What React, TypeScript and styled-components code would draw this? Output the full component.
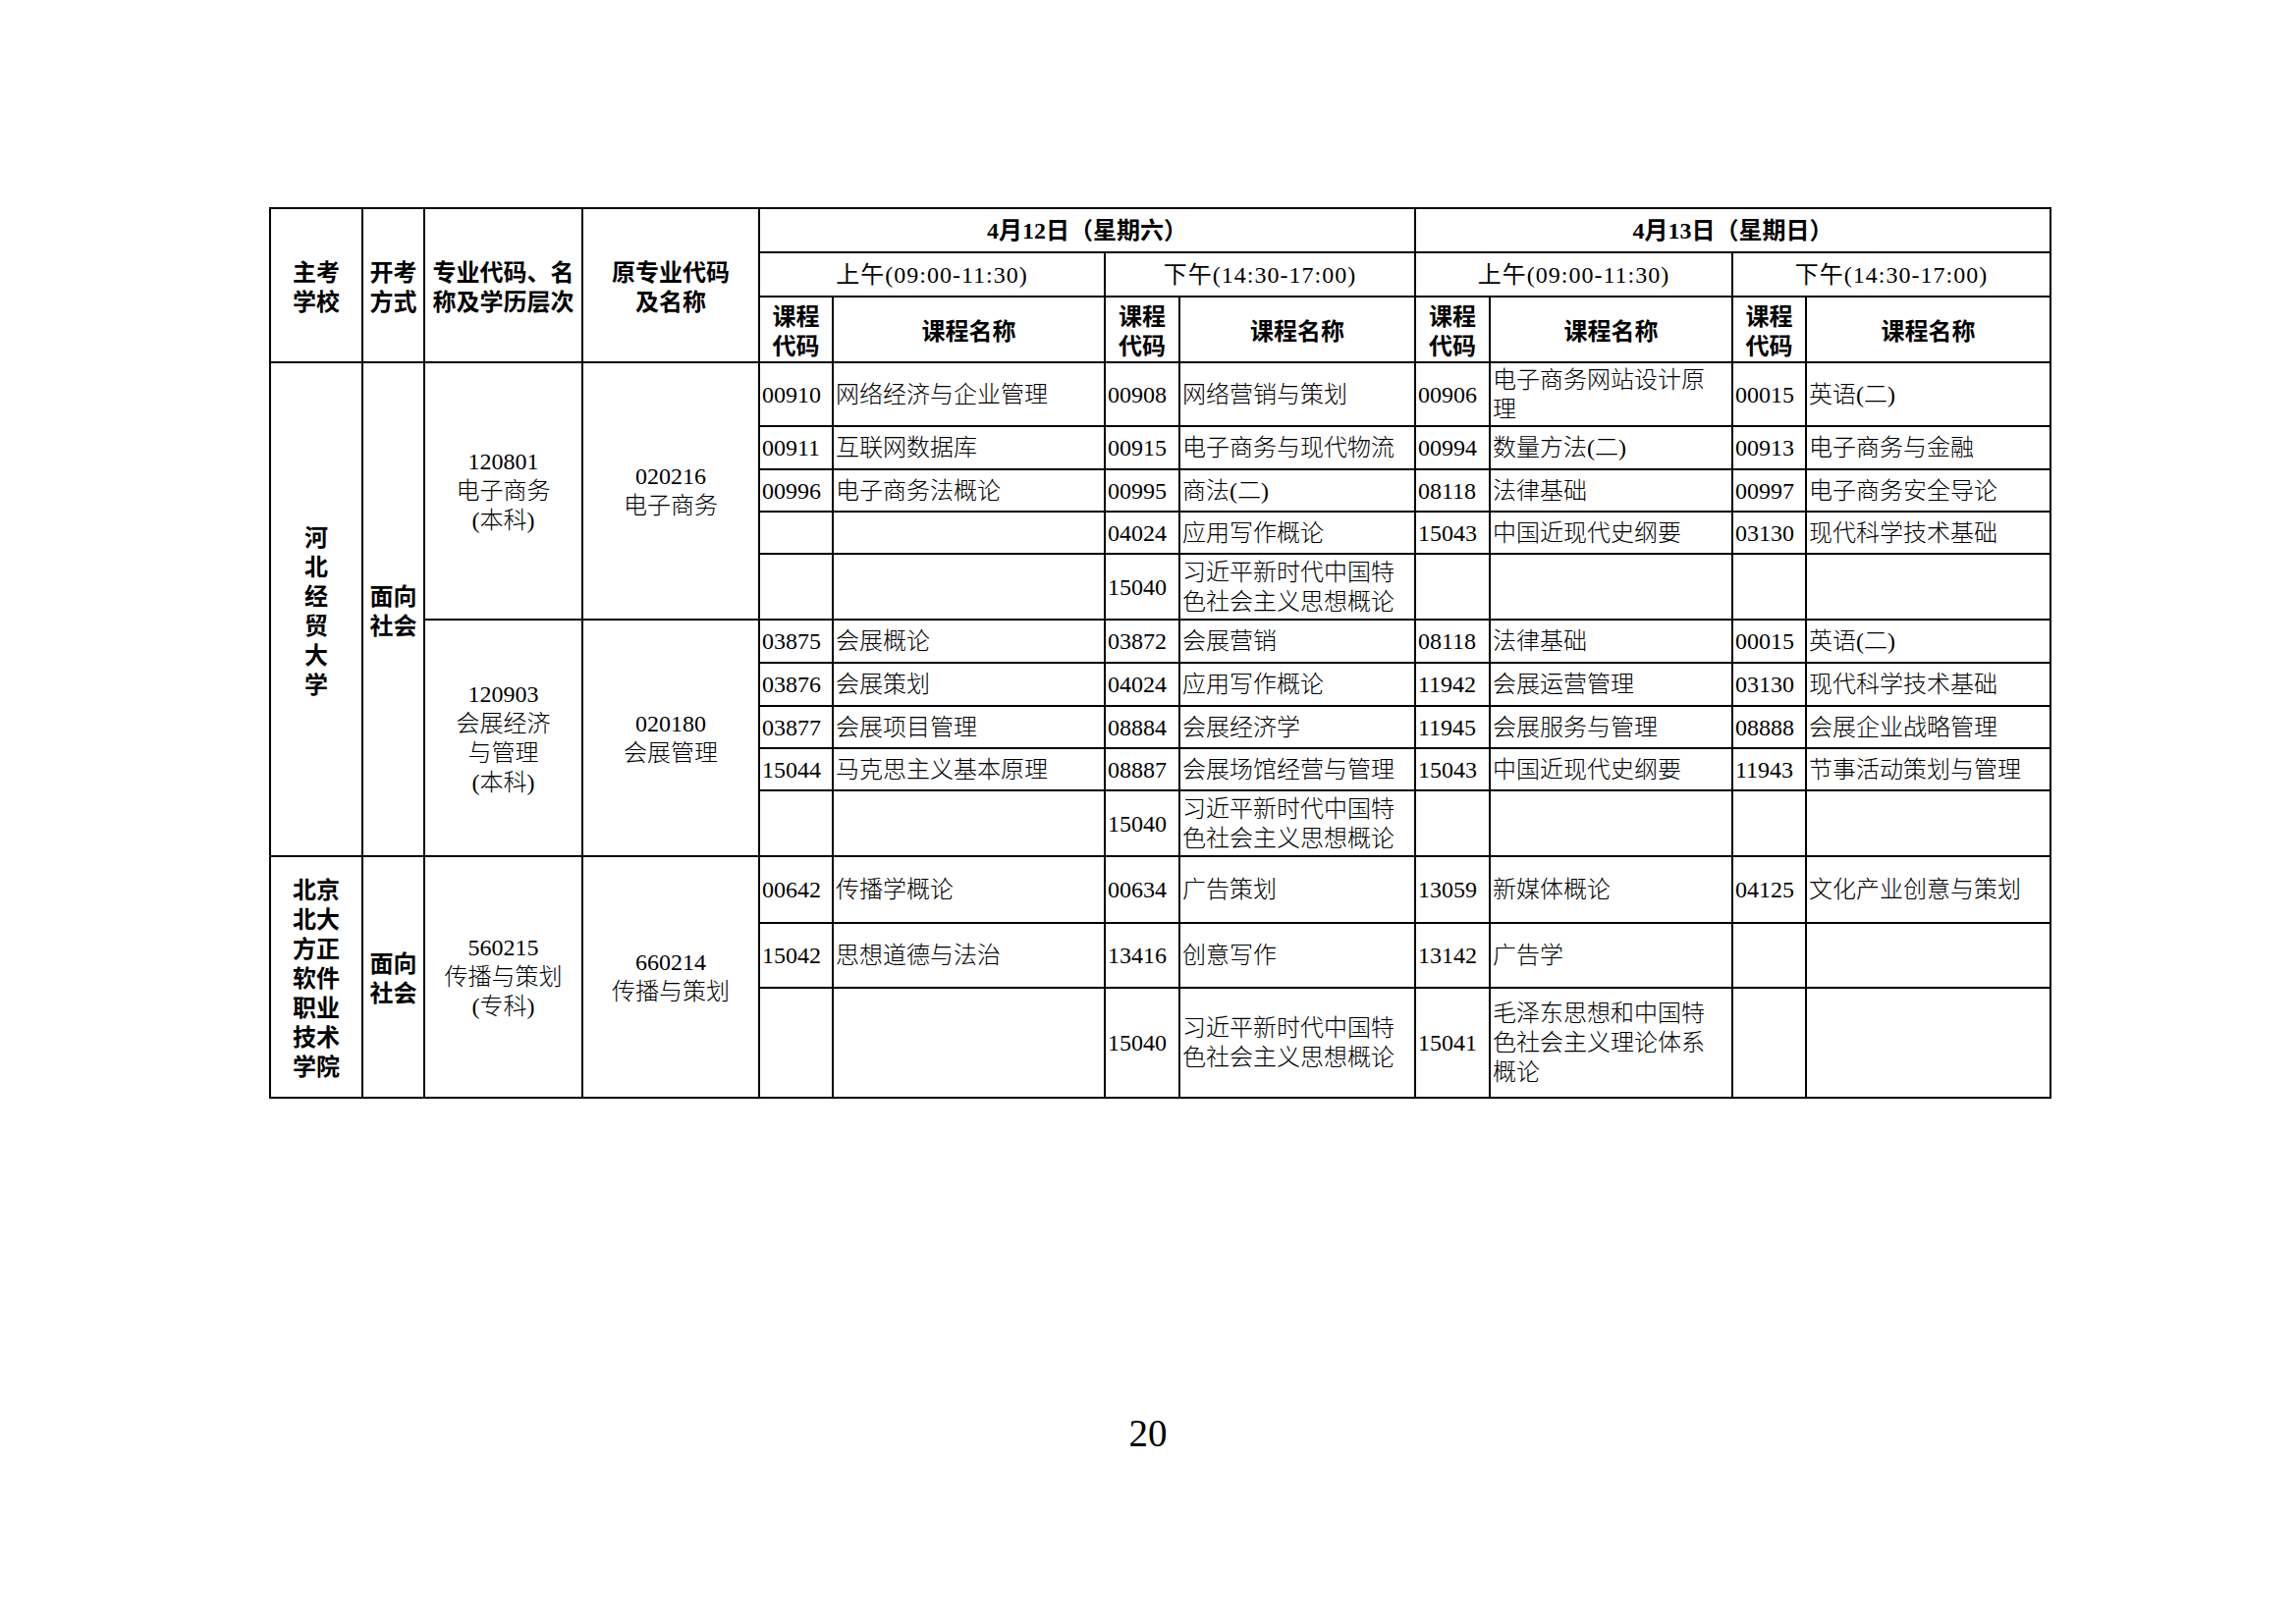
import React from 'react';
import styled, { createGlobalStyle } from 'styled-components';

const Global = createGlobalStyle`
  html, body { margin: 0; padding: 0; background: #fff; }
  body { font-family: "Liberation Serif", "Noto Sans CJK SC", serif; color: #000; }
`;

const Page = styled.div`
  width: 2338px;
  height: 1653px;
  box-sizing: border-box;
  padding-top: 211px;
  display: flex;
  flex-direction: column;
  overflow: hidden;
`;

const TableWrap = styled.div`
  padding-left: 274px;
`;

const Table = styled.table`
  border-collapse: collapse;
  table-layout: fixed;
  width: 1815px;
`;

const Row = styled.tr<{ $h: number }>`
  height: ${(p) => p.$h}px;
`;

const HeadCell = styled.th<{ $kind?: 'title' | 'date' | 'session' }>`
  border: 2px solid #000;
  padding: 0;
  font-size: 24px;
  line-height: 30px;
  text-align: center;
  vertical-align: middle;
  color: #000;
  font-family: ${(p) =>
    p.$kind === 'title' || !p.$kind
      ? '"Noto Sans CJK SC", sans-serif'
      : '"Liberation Serif", "Noto Sans CJK SC", serif'};
  font-weight: ${(p) => (p.$kind === 'session' ? 400 : 700)};
  letter-spacing: ${(p) => (p.$kind === 'session' ? '1px' : '0')};
`;

const Cell = styled.td<{ $kind: 'code' | 'name' | 'center' | 'bold' }>`
  border: 2px solid #000;
  font-size: 24px;
  line-height: 30px;
  vertical-align: middle;
  color: #000;
  text-align: ${(p) => (p.$kind === 'code' || p.$kind === 'name' ? 'left' : 'center')};
  padding: ${(p) =>
    p.$kind === 'code' ? '0 0 0 2px' : p.$kind === 'name' ? '0 8px 0 2px' : '0'};
  font-family: ${(p) =>
    p.$kind === 'bold'
      ? '"Noto Sans CJK SC", sans-serif'
      : '"Liberation Serif", "Noto Sans CJK SC", serif'};
  font-weight: ${(p) => (p.$kind === 'bold' ? 700 : 300)};
  word-break: break-all;
`;

const PageNo = styled.div`
  margin-top: 321px;
  width: 100%;
  text-align: center;
  font-family: "Liberation Serif", serif;
  font-size: 39px;
  line-height: 1;
  color: #000;
`;

const Lines: React.FC<{ lines: string[] }> = ({ lines }) => (
  <>
    {lines.map((l, i) => (
      <React.Fragment key={i}>
        {i > 0 && <br />}
        {l}
      </React.Fragment>
    ))}
  </>
);

type Course = [string, string] | null;

interface Major {
  major: string[];
  orig: string[];
  heights: number[];
  rows: Course[][];
}

interface School {
  name: string[];
  mode: string[];
  majors: Major[];
}

const schools: School[] = [
  {
    name: ['河', '北', '经', '贸', '大', '学'],
    mode: ['面向', '社会'],
    majors: [
      {
        major: ['120801', '电子商务', '(本科)'],
        orig: ['020216', '电子商务'],
        heights: [65, 44, 43, 43, 67],
        rows: [
          [['00910', '网络经济与企业管理'], ['00908', '网络营销与策划'], ['00906', '电子商务网站设计原理'], ['00015', '英语(二)']],
          [['00911', '互联网数据库'], ['00915', '电子商务与现代物流'], ['00994', '数量方法(二)'], ['00913', '电子商务与金融']],
          [['00996', '电子商务法概论'], ['00995', '商法(二)'], ['08118', '法律基础'], ['00997', '电子商务安全导论']],
          [null, ['04024', '应用写作概论'], ['15043', '中国近现代史纲要'], ['03130', '现代科学技术基础']],
          [null, ['15040', '习近平新时代中国特色社会主义思想概论'], null, null],
        ],
      },
      {
        major: ['120903', '会展经济', '与管理', '(本科)'],
        orig: ['020180', '会展管理'],
        heights: [44, 44, 43, 43, 67],
        rows: [
          [['03875', '会展概论'], ['03872', '会展营销'], ['08118', '法律基础'], ['00015', '英语(二)']],
          [['03876', '会展策划'], ['04024', '应用写作概论'], ['11942', '会展运营管理'], ['03130', '现代科学技术基础']],
          [['03877', '会展项目管理'], ['08884', '会展经济学'], ['11945', '会展服务与管理'], ['08888', '会展企业战略管理']],
          [['15044', '马克思主义基本原理'], ['08887', '会展场馆经营与管理'], ['15043', '中国近现代史纲要'], ['11943', '节事活动策划与管理']],
          [null, ['15040', '习近平新时代中国特色社会主义思想概论'], null, null],
        ],
      },
    ],
  },
  {
    name: ['北京', '北大', '方正', '软件', '职业', '技术', '学院'],
    mode: ['面向', '社会'],
    majors: [
      {
        major: ['560215', '传播与策划', '(专科)'],
        orig: ['660214', '传播与策划'],
        heights: [68, 66, 112],
        rows: [
          [['00642', '传播学概论'], ['00634', '广告策划'], ['13059', '新媒体概论'], ['04125', '文化产业创意与策划']],
          [['15042', '思想道德与法治'], ['13416', '创意写作'], ['13142', '广告学'], null],
          [null, ['15040', '习近平新时代中国特色社会主义思想概论'], ['15041', '毛泽东思想和中国特色社会主义理论体系概论'], null],
        ],
      },
    ],
  },
];

const colWidths = [94, 63, 161, 180, 75, 277, 76, 240, 76, 247, 75, 249];

const CourseCells: React.FC<{ row: Course[] }> = ({ row }) => (
  <>
    {row.map((c, i) => (
      <React.Fragment key={i}>
        <Cell $kind="code">{c ? c[0] : ''}</Cell>
        <Cell $kind="name">{c ? c[1] : ''}</Cell>
      </React.Fragment>
    ))}
  </>
);

export default function App() {
  return (
    <>
      <Global />
      <Page>
        <TableWrap>
          <Table>
            <colgroup>
              {colWidths.map((w, i) => (
                <col key={i} style={{ width: w }} />
              ))}
            </colgroup>
            <thead>
              <Row $h={45}>
                <HeadCell rowSpan={3}><Lines lines={['主考', '学校']} /></HeadCell>
                <HeadCell rowSpan={3}><Lines lines={['开考', '方式']} /></HeadCell>
                <HeadCell rowSpan={3}><Lines lines={['专业代码、名', '称及学历层次']} /></HeadCell>
                <HeadCell rowSpan={3}><Lines lines={['原专业代码', '及名称']} /></HeadCell>
                <HeadCell colSpan={4} $kind="date">4月12日（星期六）</HeadCell>
                <HeadCell colSpan={4} $kind="date">4月13日（星期日）</HeadCell>
              </Row>
              <Row $h={45}>
                <HeadCell colSpan={2} $kind="session">上午(09:00-11:30)</HeadCell>
                <HeadCell colSpan={2} $kind="session">下午(14:30-17:00)</HeadCell>
                <HeadCell colSpan={2} $kind="session">上午(09:00-11:30)</HeadCell>
                <HeadCell colSpan={2} $kind="session">下午(14:30-17:00)</HeadCell>
              </Row>
              <Row $h={67}>
                {[0, 1, 2, 3].map((i) => (
                  <React.Fragment key={i}>
                    <HeadCell><Lines lines={['课程', '代码']} /></HeadCell>
                    <HeadCell>课程名称</HeadCell>
                  </React.Fragment>
                ))}
              </Row>
            </thead>
            <tbody>
              {schools.map((s, si) => {
                const total = s.majors.reduce((a, m) => a + m.rows.length, 0);
                return s.majors.map((m, mi) =>
                  m.rows.map((r, ri) => (
                    <Row key={`${si}-${mi}-${ri}`} $h={m.heights[ri]}>
                      {mi === 0 && ri === 0 && (
                        <>
                          <Cell $kind="bold" rowSpan={total}><Lines lines={s.name} /></Cell>
                          <Cell $kind="bold" rowSpan={total}><Lines lines={s.mode} /></Cell>
                        </>
                      )}
                      {ri === 0 && (
                        <>
                          <Cell $kind="center" rowSpan={m.rows.length}><Lines lines={m.major} /></Cell>
                          <Cell $kind="center" rowSpan={m.rows.length}><Lines lines={m.orig} /></Cell>
                        </>
                      )}
                      <CourseCells row={r} />
                    </Row>
                  ))
                );
              })}
            </tbody>
          </Table>
        </TableWrap>
        <PageNo>20</PageNo>
      </Page>
    </>
  );
}
